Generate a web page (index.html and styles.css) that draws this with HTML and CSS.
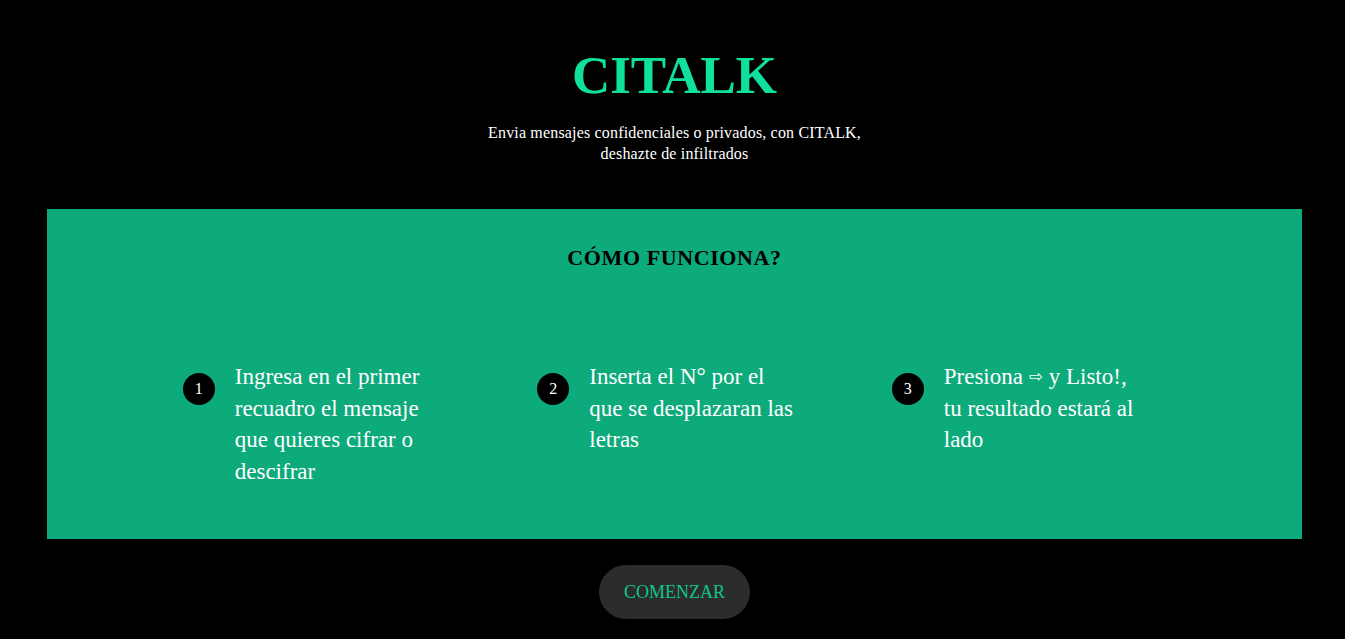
FILE: index.html
```html
<!DOCTYPE html>
<html lang="es">
<head>
<meta charset="utf-8">
<title>CITALK</title>
<link rel="stylesheet" href="styles.css">
</head>
<body>
<div class="page">
  <header class="hero">
    <h1 class="brand">CITALK</h1>
    <p class="tagline">Envia mensajes confidenciales o privados, con CITALK,<br>deshazte de infiltrados</p>
  </header>
  <section class="how">
    <h2 class="how-title">CÓMO FUNCIONA?</h2>
    <div class="steps">
      <div class="step">
        <span class="num">1</span>
        <p class="step-text">Ingresa en el primer recuadro el mensaje que quieres cifrar o descifrar</p>
      </div>
      <div class="step">
        <span class="num">2</span>
        <p class="step-text">Inserta el N° por el que se desplazaran las letras</p>
      </div>
      <div class="step">
        <span class="num">3</span>
        <p class="step-text">Presiona <span class="arrow">⇨</span> y Listo!, tu resultado estará al lado</p>
      </div>
    </div>
  </section>
  <div class="cta-wrap">
    <button class="cta">COMENZAR</button>
  </div>
</div>
</body>
</html>
```
FILE: styles.css
```css
html, body {
  margin: 0;
  padding: 0;
  background: #000;
  font-family: "Liberation Serif", "Times New Roman", serif;
  color: #fff;
  overflow: hidden;
}
.page {
  width: 1349px;
}
.hero {
  text-align: center;
  padding-top: 43px;
  height: 209px;
  box-sizing: border-box;
}
.brand {
  margin: 0;
  font-size: 53px;
  line-height: 64px;
  font-weight: bold;
  color: #10e09e;
}
.tagline {
  margin: 15px 0 0;
  font-size: 16px;
  line-height: 21px;
  letter-spacing: 0.17px;
}
.how {
  margin: 0 47px;
  height: 330px;
  background: #0daa7b;
  box-sizing: border-box;
  padding-top: 35px;
}
.how-title {
  margin: 0;
  text-align: center;
  font-size: 22px;
  line-height: 28px;
  letter-spacing: 0.6px;
  color: #000;
  font-weight: bold;
}
.steps {
  display: flex;
  justify-content: center;
  margin-top: 89px;
}
.step {
  width: 354.5px;
  box-sizing: border-box;
  padding-left: 40px;
  display: flex;
  align-items: flex-start;
  gap: 20px;
}
.num {
  flex: none;
  width: 32px;
  height: 32px;
  margin-top: 12px;
  border-radius: 50%;
  background: #000;
  color: #fff;
  font-size: 16px;
  display: flex;
  align-items: center;
  justify-content: center;
}
.step-text {
  margin: 0;
  width: 205px;
  font-size: 23px;
  line-height: 31.5px;
}
.arrow {
  font-family: "DejaVu Sans", sans-serif;
  font-size: 17px;
  vertical-align: 2px;
}
.cta-wrap {
  display: flex;
  justify-content: center;
  padding-top: 26px;
}
.cta {
  width: 151px;
  height: 54px;
  border: none;
  border-radius: 27px;
  background: #2b2d2c;
  color: #10c58c;
  font-family: "Liberation Serif", "Times New Roman", serif;
  font-size: 18px;
  padding: 0;
}
```
